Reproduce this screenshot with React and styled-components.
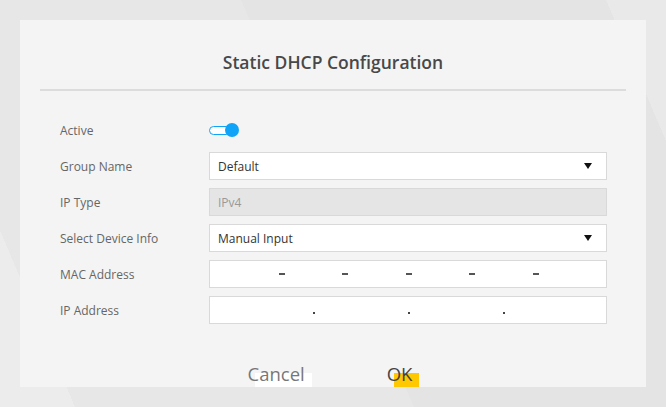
import React from "react";
import styled, { createGlobalStyle } from "styled-components";

const GlobalStyle = createGlobalStyle`
  html, body {
    margin: 0;
    padding: 0;
  }
  body {
    font-family: "Open Sans", "Noto Sans", sans-serif;
    background: #e6e6e6;
  }
`;

const Screen = styled.div`
  width: 666px;
  height: 407px;
  padding: 20px;
  box-sizing: border-box;
  background: linear-gradient(
    67deg,
    #ececec 0 69px,
    #e7e7e7 69px 381px,
    #e4e4e4 381px 717px,
    #e9e9e9 717px
  );
`;

const Dialog = styled.div`
  width: 626px;
  height: 367px;
  background: #f4f4f4;
  overflow: hidden;
  display: flex;
  flex-direction: column;
`;

const Header = styled.div`
  margin: 0 20px;
  padding: 30px 0 15px;
  border-bottom: 2px solid #dcdcdc;
  text-align: center;
  font-size: 17.5px;
  font-weight: 600;
  line-height: 24px;
  color: #484848;
`;

const Form = styled.div`
  padding: 21px 39px 0 40px;
  display: flex;
  flex-direction: column;
`;

const Row = styled.div`
  display: grid;
  grid-template-columns: 149px 1fr;
  align-items: center;
  height: 36px;
`;

const Label = styled.div`
  font-size: 12px;
  color: #666;
`;

const Field = styled.div`
  height: 28px;
  box-sizing: border-box;
  border: 1px solid #d9d9d9;
  background: ${(p) => (p.disabled ? "#e5e5e5" : "#fff")};
  color: ${(p) => (p.disabled ? "#999" : "#333")};
  font-size: 12px;
  padding: 0 0 0 8px;
  display: flex;
  align-items: center;
  justify-content: space-between;
`;

const Caret = styled.span`
  width: 0;
  height: 0;
  margin-right: 14px;
  border-left: 4.5px solid transparent;
  border-right: 4.5px solid transparent;
  border-top: 6px solid #111;
`;

const Segments = styled(Field)`
  padding-left: 11px;
  justify-content: flex-start;
`;

const Segment = styled.span`
  width: ${(p) => p.w}px;
`;

const Dash = styled.span`
  width: 6px;
  height: 2px;
  background: #555;
`;

const Dot = styled.span`
  width: 2px;
  height: 2px;
  margin: 0 1.5px;
  background: #444;
  align-self: center;
  transform: translateY(3px);
`;

const Toggle = styled.div`
  position: relative;
  width: 30px;
  height: 14px;
  display: flex;
  align-items: center;
`;

const Track = styled.div`
  width: 22px;
  height: 9px;
  box-sizing: border-box;
  border: 1.5px solid #0fa4f7;
  border-radius: 5px;
  background: #fff;
`;

const Knob = styled.div`
  position: absolute;
  left: 16px;
  top: 0;
  width: 14px;
  height: 14px;
  border-radius: 50%;
  background: #0fa4f7;
`;

const Buttons = styled.div`
  margin-top: 35px;
  padding-right: 6px;
  display: flex;
  justify-content: center;
  gap: 82px;
`;

const Button = styled.div`
  position: relative;
  font-size: 18.5px;
  line-height: 22px;
  color: ${(p) => (p.primary ? "#444" : "#777")};
  &::before {
    content: "";
    position: absolute;
    left: 7px;
    top: 10px;
    width: 100%;
    height: 100%;
    background: ${(p) => (p.primary ? "#ffc800" : "#fff")};
  }
  span {
    position: relative;
  }
`;

const MacField = () => (
  <Segments>
    {[0, 1, 2, 3, 4].map((i) => (
      <React.Fragment key={i}>
        <Segment w={57.5} />
        <Dash />
      </React.Fragment>
    ))}
  </Segments>
);

const IpField = () => (
  <Segments>
    {[0, 1, 2].map((i) => (
      <React.Fragment key={i}>
        <Segment w={90} />
        <Dot />
      </React.Fragment>
    ))}
  </Segments>
);

export default function App() {
  return (
    <>
      <GlobalStyle />
      <Screen>
        <Dialog>
          <Header>Static DHCP Configuration</Header>
          <Form>
            <Row>
              <Label>Active</Label>
              <Toggle>
                <Track />
                <Knob />
              </Toggle>
            </Row>
            <Row>
              <Label>Group Name</Label>
              <Field>
                Default
                <Caret />
              </Field>
            </Row>
            <Row>
              <Label>IP Type</Label>
              <Field disabled>IPv4</Field>
            </Row>
            <Row>
              <Label>Select Device Info</Label>
              <Field>
                Manual Input
                <Caret />
              </Field>
            </Row>
            <Row>
              <Label>MAC Address</Label>
              <MacField />
            </Row>
            <Row>
              <Label>IP Address</Label>
              <IpField />
            </Row>
          </Form>
          <Buttons>
            <Button>
              <span>Cancel</span>
            </Button>
            <Button primary>
              <span>OK</span>
            </Button>
          </Buttons>
        </Dialog>
      </Screen>
    </>
  );
}
